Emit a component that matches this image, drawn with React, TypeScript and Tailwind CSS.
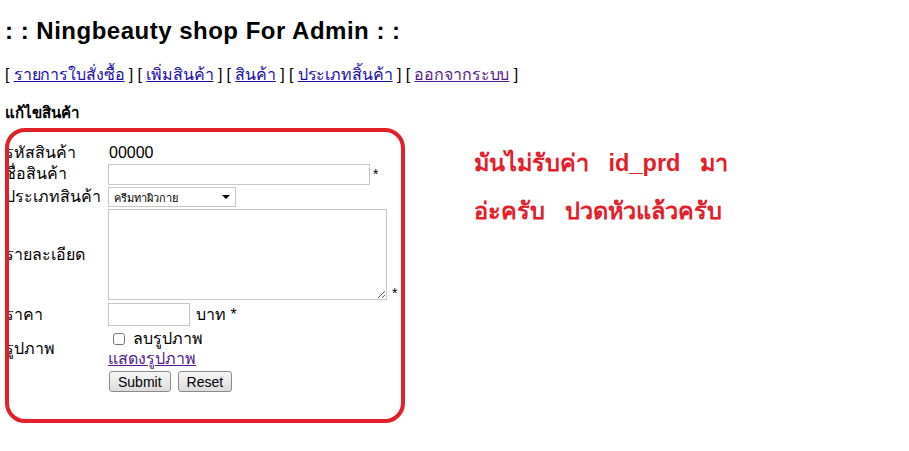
import { useState } from 'react';

const labelCls = 'w-[108px] pl-[5px] whitespace-nowrap text-[16px]';

export default function App() {
  const [removeImg, setRemoveImg] = useState(false);

  return (
    <div className="relative w-[909px] h-[451px] bg-white text-black font-['Tahoma','Liberation_Sans','Noto_Sans',sans-serif] overflow-hidden">
      <h1 className="pl-[5px] pt-[16px] text-[24px] leading-[30px] font-bold tracking-[0.5px]">: : Ningbeauty shop For Admin : :</h1>

      <nav className="pl-[5px] mt-[19px] text-[16px] leading-[20px] whitespace-pre tracking-[-0.1px]">
        {'[ '}<a href="#" className="text-[#1a0dab] underline">รายการใบสั่งซื้อ</a>{' ] [ '}
        <a href="#" className="text-[#1a0dab] underline">เพิ่มสินค้า</a>{' ] [ '}
        <a href="#" className="text-[#1a0dab] underline">สินค้า</a>{' ] [ '}
        <a href="#" className="text-[#1a0dab] underline">ประเภทสิ้นค้า</a>{' ] [ '}
        <a href="#" className="text-[#551a8b] underline">ออกจากระบบ</a>{' ]'}
      </nav>

      <h2 className="pl-[5px] mt-[19px] text-[15px] leading-[18px] font-bold">แก้ไขสินค้า</h2>

      <form className="mt-[21px] text-[15px] leading-[20px]">
        <div className="flex items-center h-[20px]">
          <div className={labelCls}>รหัสสินค้า</div>
          <div className="pl-[1px] text-[16px] font-['Liberation_Sans',sans-serif]">00000</div>
        </div>
        <div className="flex items-center h-[22px]">
          <div className={labelCls}>ชื่อสินค้า</div>
          <input className="w-[262px] h-[21px] border border-[#c8c8c8] bg-white" />
          <span className="ml-[3px] text-[14px]">*</span>
        </div>
        <div className="flex items-center h-[24px]">
          <div className={labelCls}>ประเภทสินค้า</div>
          <div className="relative">
            <select className="appearance-none w-[128px] h-[20px] border border-[#c8c8c8] bg-white text-[11px] pl-[5px]">
              <option>ครีมทาผิวกาย</option>
            </select>
            <span className="absolute right-[6px] top-[8px] w-0 h-0 border-l-[4px] border-r-[4px] border-t-[4px] border-l-transparent border-r-transparent border-t-black pointer-events-none" />
          </div>
        </div>
        <div className="flex items-center">
          <div className={labelCls}>รายละเอียด</div>
          <textarea className="w-[279px] h-[91px] border border-[#c8c8c8] bg-white" />
          <span className="self-end ml-[5px] text-[14px] leading-[14px]">*</span>
        </div>
        <div className="flex items-center h-[29px]">
          <div className={labelCls}>ราคา</div>
          <input className="w-[82px] h-[23px] border border-[#c8c8c8] bg-white" />
          <span className="ml-[6px] text-[16px]">บาท *</span>
        </div>
        <div className="flex items-center">
          <div className={labelCls}>รูปภาพ</div>
          <div className="flex flex-col text-[16px]">
            <label className="flex items-center h-[20px] pl-[5px] gap-[8px]">
              <input
                type="checkbox"
                checked={removeImg}
                onChange={(e) => setRemoveImg(e.target.checked)}
                className="w-[12px] h-[12px]"
              />
              ลบรูปภาพ
            </label>
            <a href="#" className="text-[#551a8b] underline leading-[20px]">แสดงรูปภาพ</a>
          </div>
        </div>
        <div className="flex items-center h-[24px]">
          <div className={labelCls}></div>
          <div className="flex gap-[7px] pl-[1px] font-['Liberation_Sans',sans-serif] text-[14px]">
            <button type="submit" className="h-[21px] px-[8px] border border-[#8a8a8a] rounded-[3px] bg-gradient-to-b from-[#f6f6f6] to-[#dcdcdc]">Submit</button>
            <button type="reset" className="h-[21px] px-[8px] border border-[#8a8a8a] rounded-[3px] bg-gradient-to-b from-[#f6f6f6] to-[#dcdcdc]">Reset</button>
          </div>
        </div>
      </form>

      {/* annotation drawn over the screenshot */}
      <div className="absolute left-[5px] top-[128px] w-[400px] h-[295px] border-[4px] border-[#e3202a] rounded-[20px] pointer-events-none" />
      <div className="absolute left-[474px] top-[139px] text-[#e3202a] font-bold text-[23.5px] leading-[48px] whitespace-pre">
        <div>มันไม่รับค่า   id_prd   มา</div>
        <div>อ่ะครับ   ปวดหัวแล้วครับ</div>
      </div>
    </div>
  );
}
